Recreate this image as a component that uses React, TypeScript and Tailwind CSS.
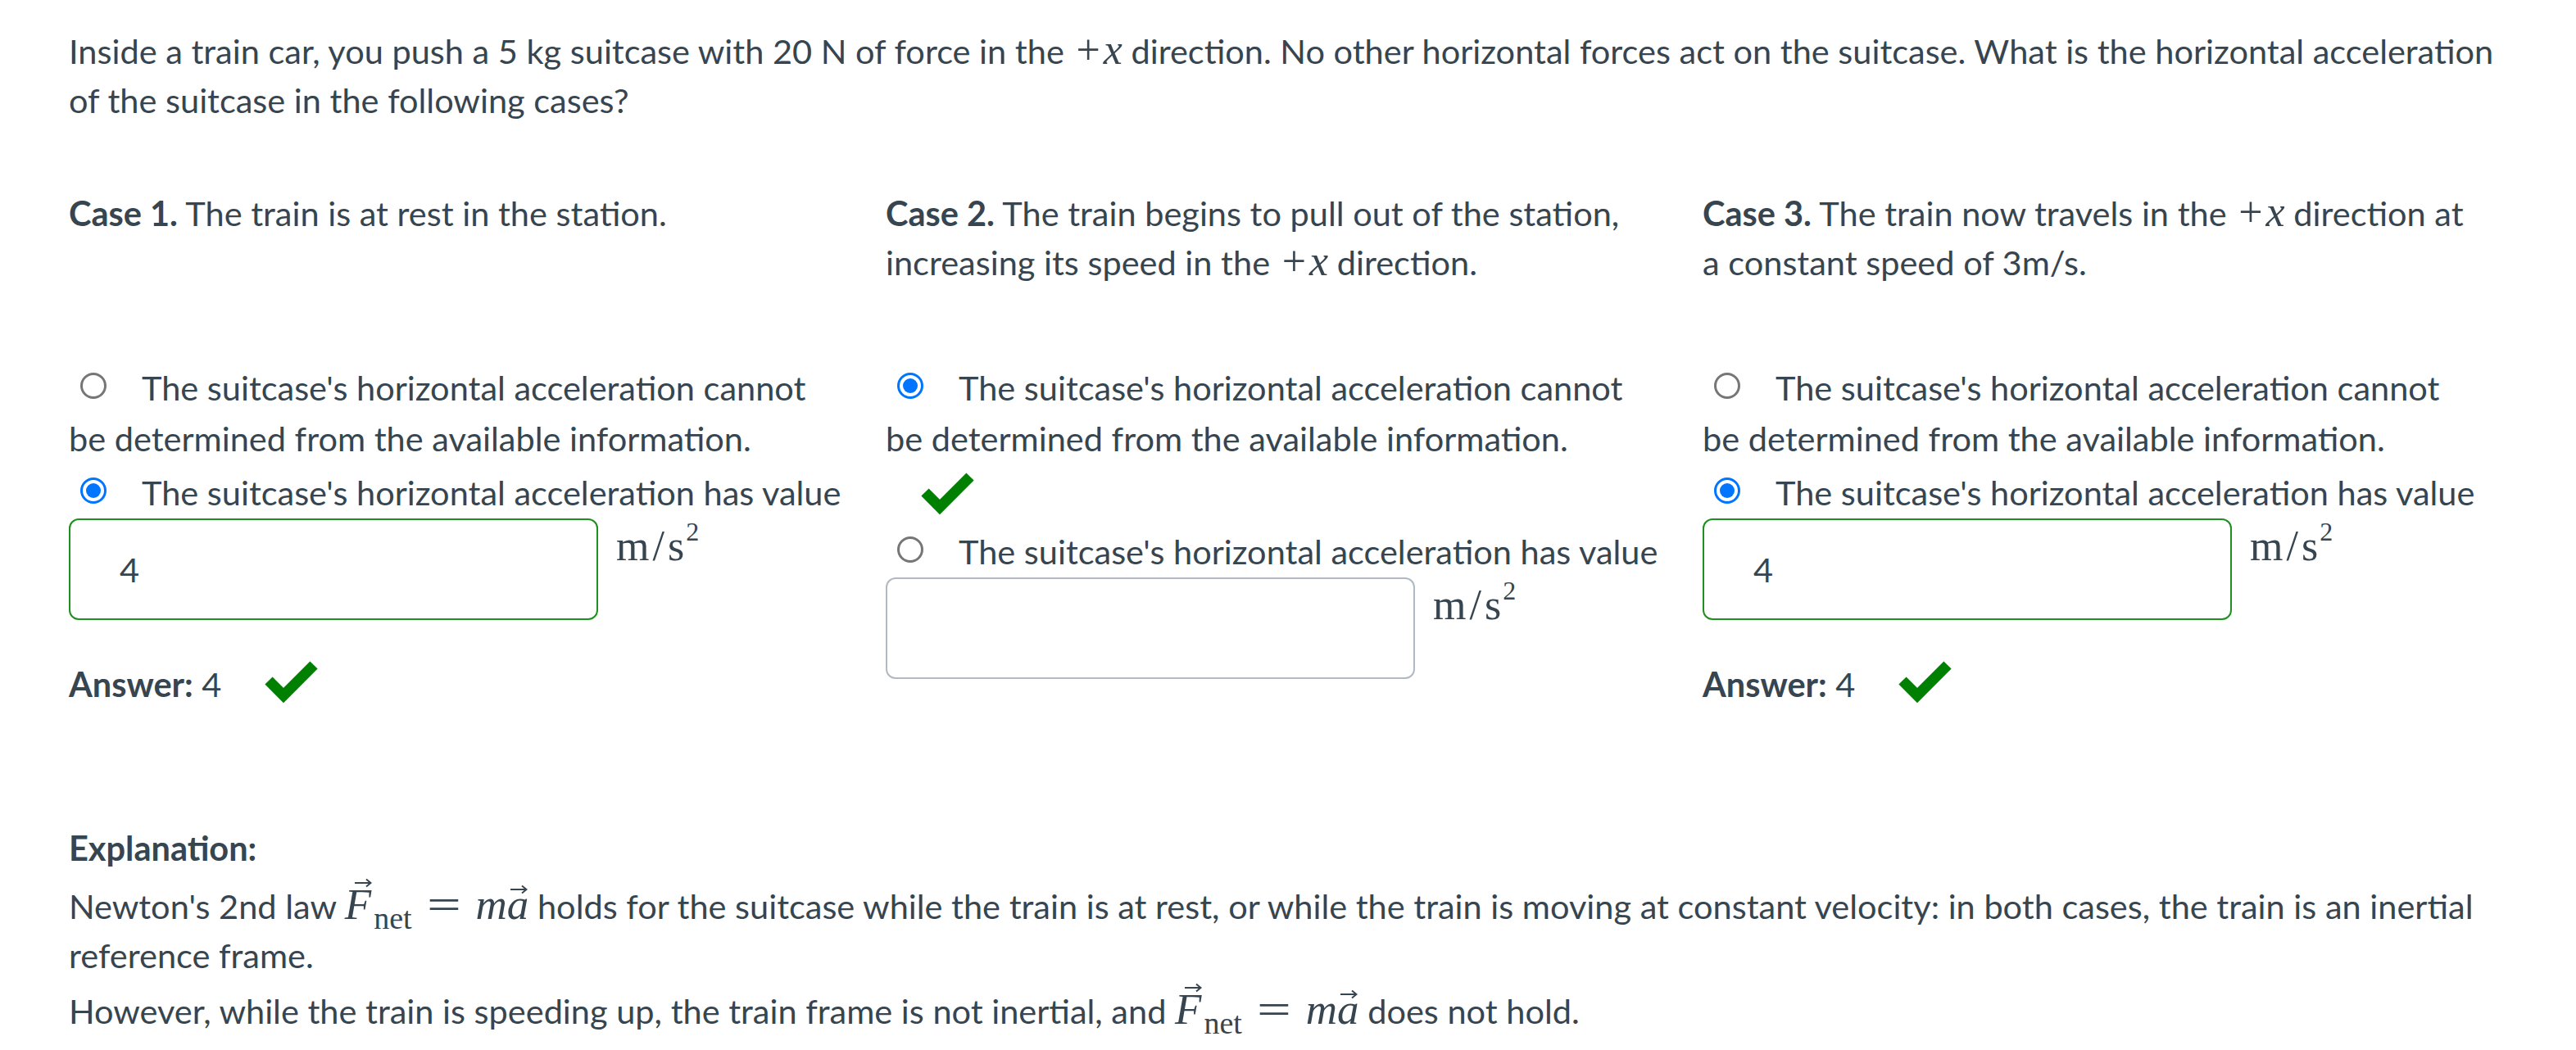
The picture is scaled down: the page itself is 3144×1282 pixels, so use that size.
import React from 'react';

const serif = "font-['Liberation_Serif',serif]";

function Radio({ checked }: { checked?: boolean }) {
  if (checked) {
    return (
      <span className="relative -top-[7px] inline-flex align-middle items-center justify-center w-[32px] h-[32px] rounded-full border-[3px] border-[#0075ff] ml-[14px] mr-[43px]">
        <span className="w-[18px] h-[18px] rounded-full bg-[#0075ff]" />
      </span>
    );
  }
  return (
    <span className="relative -top-[7px] inline-block align-middle w-[32px] h-[32px] rounded-full border-[3px] border-[#767676] ml-[14px] mr-[43px]" />
  );
}

function Check() {
  return (
    <svg width="72" height="60" viewBox="0 0 72 60" className="inline-block">
      <polyline
        points="8,30 26,48 63,11"
        fill="none"
        stroke="#008000"
        strokeWidth="13"
        strokeLinejoin="miter"
      />
    </svg>
  );
}

function Arrow({ className }: { className: string }) {
  return (
    <svg width="22" height="12" viewBox="0 0 22 12" className={className}>
      <path d="M1 6H20M15 1.5L20.5 6L15 10.5" fill="none" stroke="#36454f" strokeWidth="2" />
    </svg>
  );
}

// +x as typeset by the math renderer
function PlusX() {
  return (
    <span className={`${serif} text-[52px] leading-none`}>
      <span className="px-[4px]">+</span>
      <span className="italic">x</span>
    </span>
  );
}

// F_net = m a
function Newton() {
  return (
    <span className={`${serif} text-[53px] leading-none whitespace-nowrap`}>
      <span className="relative inline-block italic pr-[3px]">
        F
        <Arrow className="absolute left-[11px] -top-[6px]" />
      </span>
      <span className="relative top-[12px] text-[38px]">net</span>
      <span className="inline-block scale-x-[1.4] mx-[24px]">=</span>
      <span className="italic">m</span>
      <span className="relative inline-block italic">
        a
        <Arrow className="absolute left-[3px] top-[2px]" />
      </span>
    </span>
  );
}

function Unit() {
  return (
    <span className={`${serif} text-[52px] leading-none mt-[8px] ml-[22px] whitespace-nowrap`}>
      m<span className="mx-[4px]">/</span>s
      <span className="relative -top-[24px] text-[32px] ml-[2px]">2</span>
    </span>
  );
}

function ValueBox({ value, correct }: { value?: string; correct?: boolean }) {
  return (
    <div className="flex items-start mt-[1px]">
      <div
        className={
          correct
            ? 'w-[646px] h-[124px] shrink-0 rounded-[12px] border-2 border-[#1f8f1f] flex items-center pl-[60px]'
            : 'w-[646px] h-[124px] shrink-0 rounded-[12px] border-2 border-[#b1bac4] flex items-center pl-[60px]'
        }
      >
        {value}
      </div>
      <Unit />
    </div>
  );
}

function Option({ checked, children }: { checked?: boolean; children: React.ReactNode }) {
  return (
    <div className="leading-[62px]">
      <Radio checked={checked} />
      {children}
    </div>
  );
}

function Answer() {
  return (
    <div className="mt-[48px] flex items-center">
      <span>
        <span className="font-bold">Answer:</span> 4
      </span>
      <span className="ml-[50px] -mt-[14px]">
        <Check />
      </span>
    </div>
  );
}

export default function App() {
  return (
    <div className="min-h-screen bg-white px-[84px] pt-[32px] font-['Lato',sans-serif] text-[41.5px] leading-[60px] text-[#36454f]">
      <p>
        Inside a train car, you push a 5 kg suitcase with 20 N of force in the <PlusX /> direction. No other
        horizontal forces act on the suitcase. What is the horizontal acceleration
        <br />
        of the suitcase in the following cases?
      </p>

      <div className="mt-[78px] grid grid-cols-[961px_961px_961px] gap-x-[36px] gap-y-[92px]">
        <p>
          <span className="font-bold">Case 1.</span> The train is at rest in the station.
        </p>
        <p>
          <span className="font-bold">Case 2.</span> The train begins to pull out of the station,
          <br />
          increasing its speed in the <PlusX /> direction.
        </p>
        <p>
          <span className="font-bold">Case 3.</span> The train now travels in the <PlusX /> direction at
          <br />
          a constant speed of 3m/s.
        </p>

        {/* case 1 */}
        <div>
          <Option>
            The suitcase's horizontal acceleration cannot
            <br />
            be determined from the available information.
          </Option>
          <div className="mt-[4px]">
            <Option checked>The suitcase's horizontal acceleration has value</Option>
          </div>
          <ValueBox value="4" correct />
          <Answer />
        </div>

        {/* case 2 */}
        <div>
          <Option checked>
            The suitcase's horizontal acceleration cannot
            <br />
            be determined from the available information.
          </Option>
          <div className="h-[76px] pl-[40px]">
            <Check />
          </div>
          <Option>The suitcase's horizontal acceleration has value</Option>
          <ValueBox />
        </div>

        {/* case 3 */}
        <div>
          <Option>
            The suitcase's horizontal acceleration cannot
            <br />
            be determined from the available information.
          </Option>
          <div className="mt-[4px]">
            <Option checked>The suitcase's horizontal acceleration has value</Option>
          </div>
          <ValueBox value="4" correct />
          <Answer />
        </div>
      </div>

      <div className="mt-[140px]">
        <div className="font-bold">Explanation:</div>
        <p className="mt-[11px]">
          Newton's 2nd law <Newton /> holds for the suitcase while the train is at rest, or while the train is
          moving at constant velocity: in both cases, the train is an inertial
          <br />
          reference frame.
        </p>
        <p className="mt-[8px]">
          However, while the train is speeding up, the train frame is not inertial, and <Newton /> does not hold.
        </p>
      </div>
    </div>
  );
}
